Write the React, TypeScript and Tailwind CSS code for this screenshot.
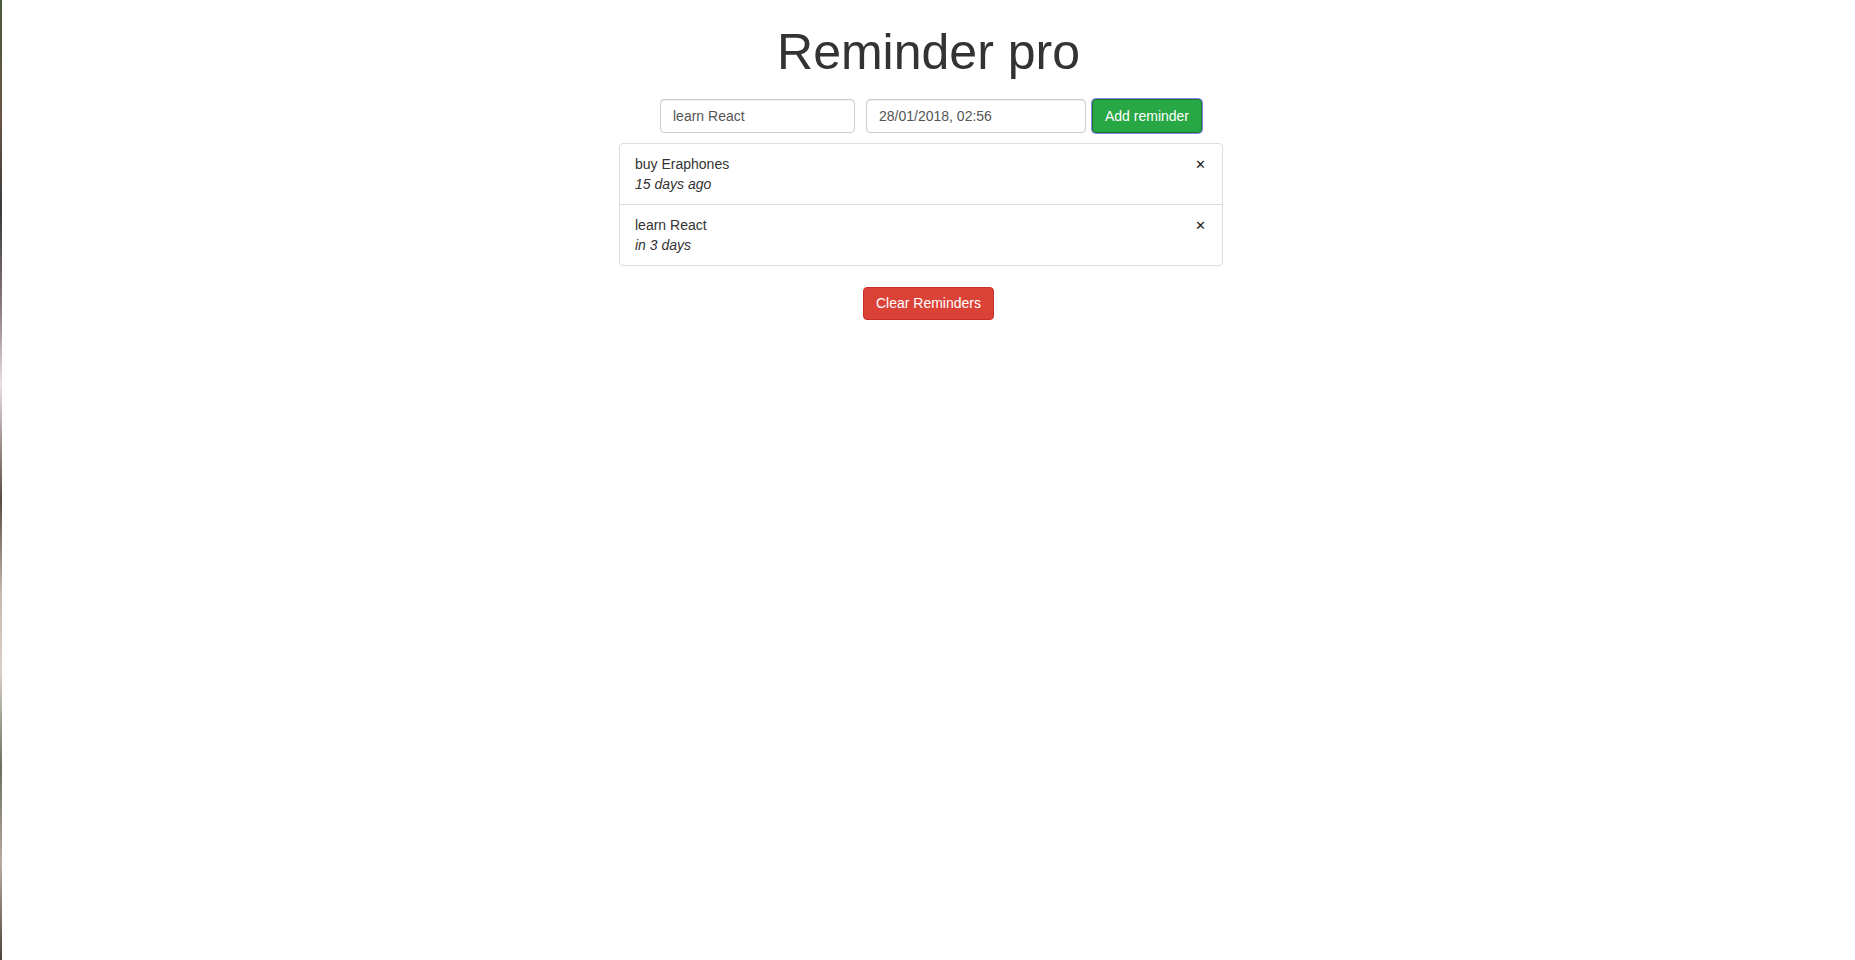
import { useState } from 'react'

type Reminder = { id: number; text: string; when: string }

const initialReminders: Reminder[] = [
  { id: 1, text: 'buy Eraphones', when: '15 days ago' },
  { id: 2, text: 'learn React', when: 'in 3 days' },
]

export default function App() {
  const [reminders, setReminders] = useState<Reminder[]>(initialReminders)
  const [text, setText] = useState('learn React')
  const [dueDate, setDueDate] = useState('28/01/2018, 02:56')

  const removeReminder = (id: number) => {
    setReminders(reminders.filter(r => r.id !== id))
  }

  return (
    <div className="flex min-h-screen bg-white font-['Liberation_Sans',Arial,sans-serif] text-[14px] text-[#333]">
      <div className="w-[2px] shrink-0 bg-[linear-gradient(to_bottom,#4a5a3a_0%,#6b5546_12%,#3b3b3b_22%,#8a7a80_32%,#e8e0e0_40%,#5a4a44_52%,#c9b8b0_62%,#d8cfc8_70%,#6a7060_80%,#b9aaa0_90%,#4c443c_100%)]" />
      <div className="flex flex-1 flex-col items-center pt-[25px]">
        <h1 className="text-[50px] leading-[55px] font-normal text-[#333]">Reminder pro</h1>

        <div className="mt-[19px] ml-[5px] flex items-center">
          <input
            className="h-[34px] w-[195px] rounded-[4px] border border-[#ccc] px-[12px] text-[14px] text-[#555] shadow-[inset_0_1px_1px_rgba(0,0,0,0.075)] outline-none"
            value={text}
            onChange={e => setText(e.target.value)}
          />
          <input
            className="ml-[11px] h-[34px] w-[220px] rounded-[4px] border border-[#ccc] px-[12px] text-[14px] text-[#555] shadow-[inset_0_1px_1px_rgba(0,0,0,0.075)] outline-none"
            value={dueDate}
            onChange={e => setDueDate(e.target.value)}
          />
          <button
            className="ml-[6px] h-[34px] w-[110px] rounded-[4px] border border-[#1c7a32] bg-[#28a745] text-[14px] text-white shadow-[0_0_0_1px_#8585e6]"
            onClick={() => {
              if (!text) return
              setReminders([...reminders, { id: Date.now(), text, when: 'in 3 days' }])
            }}
          >
            Add reminder
          </button>
        </div>

        <ul className="mt-[10px] mr-[15px] w-[604px] rounded-[4px] border border-[#ddd]">
          {reminders.map((r, i) => (
            <li
              key={r.id}
              className={`flex justify-between px-[15px] py-[10px] leading-[20px] ${i > 0 ? 'border-t border-[#ddd]' : ''}`}
            >
              <div>
                <div>{r.text}</div>
                <div className="italic">{r.when}</div>
              </div>
              <span
                className="mt-[1px] mr-[1px] cursor-pointer font-['DejaVu_Sans',sans-serif] text-[13px] font-bold leading-[20px] text-[#222]"
                onClick={() => removeReminder(r.id)}
              >
                ✕
              </span>
            </li>
          ))}
        </ul>

        <button
          className="mt-[21px] h-[33px] w-[131px] rounded-[4px] border border-[#c9302c] bg-[#db4237] text-[14px] text-white"
          onClick={() => setReminders([])}
        >
          Clear Reminders
        </button>
      </div>
    </div>
  )
}
